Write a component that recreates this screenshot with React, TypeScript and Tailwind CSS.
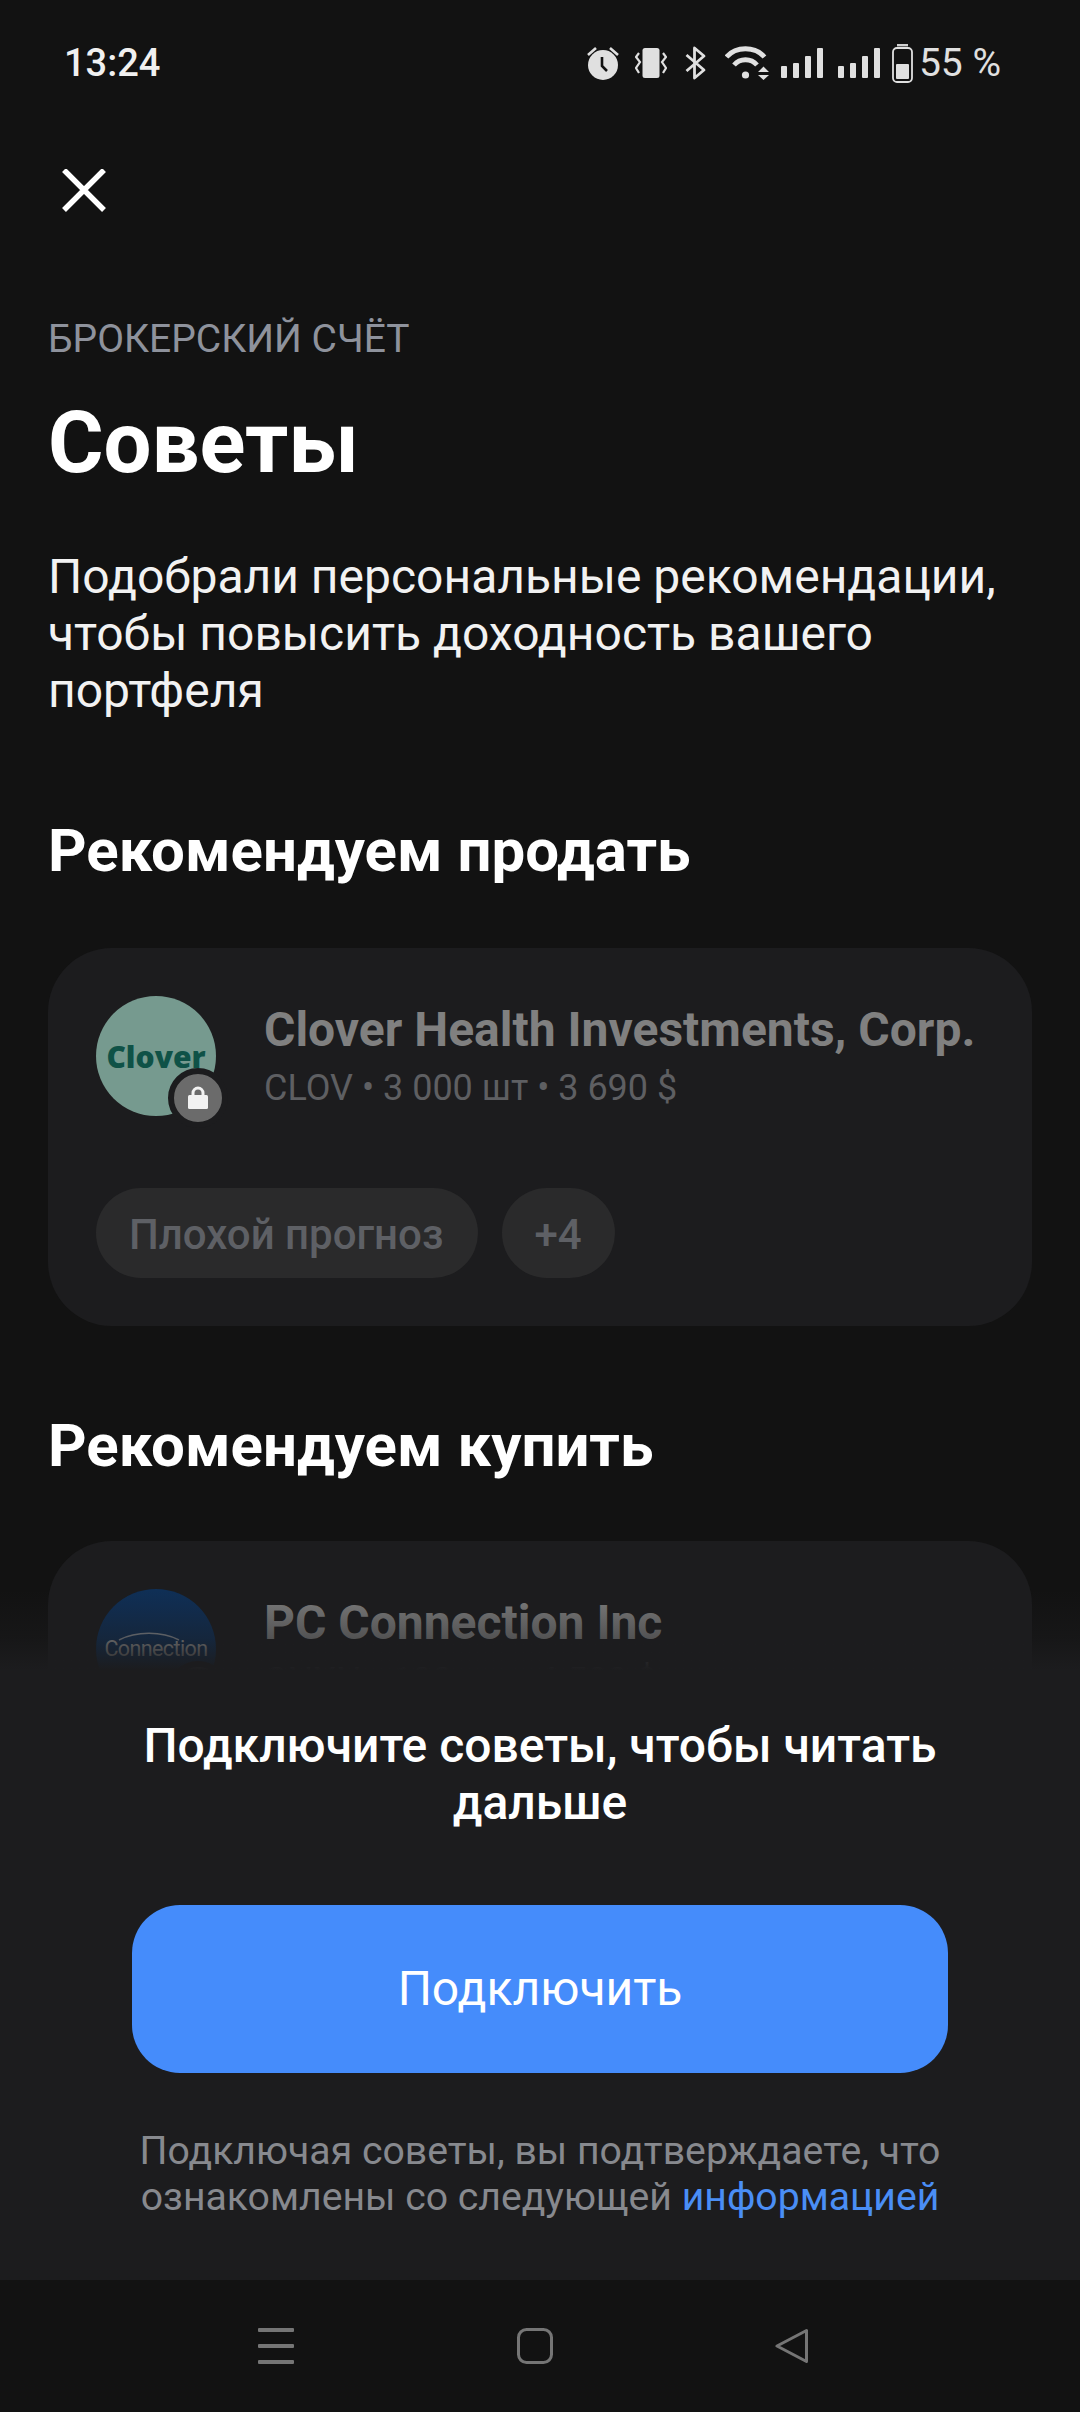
import React from "react";

function Alarm() {
  return (
    <svg width="32" height="34" viewBox="0 0 32 34" fill="none">
      <circle cx="16" cy="19" r="15" fill="#e0e0e0" />
      <path d="M1 9 L9 2 M31 9 L23 2" stroke="#e0e0e0" strokeWidth="2.6" />
      <path d="M15 11 V20 L20 25" stroke="#121212" strokeWidth="2.6" fill="none" />
    </svg>
  );
}
function Vibrate() {
  return (
    <svg width="32" height="30" viewBox="0 0 32 30" fill="none">
      <rect x="7.500" y="0" width="17" height="30" rx="2.500" fill="#e0e0e0" />
      <path d="M4 5 L1 9 L5 14 L1 20 L4 25" stroke="#e0e0e0" strokeWidth="2.200" />
      <path d="M28 5 L31 9 L27 14 L31 20 L28 25" stroke="#e0e0e0" strokeWidth="2.200" />
    </svg>
  );
}
function Bluetooth() {
  return (
    <svg width="21" height="34" viewBox="0 0 21 34" fill="none">
      <path d="M1.500 9 L19 24 L9.500 32 V2 L19 10 L1.500 25" stroke="#e0e0e0" strokeWidth="2.800" strokeLinejoin="round" />
    </svg>
  );
}
function Wifi() {
  return (
    <svg width="44" height="34" viewBox="0 0 44 34" fill="none">
      <path d="M1.500 11 C11 0 30 0 39.500 11" stroke="#e0e0e0" strokeWidth="4.800" />
      <path d="M9 19 C15 12 26 12 32 19" stroke="#e0e0e0" strokeWidth="4.800" />
      <circle cx="20.500" cy="29" r="3.600" fill="#e0e0e0" />
      <path d="M33 26 L44 26 L38.500 20.500 Z M33 29 L44 29 L38.500 34 Z" fill="#e0e0e0" />
    </svg>
  );
}
function Signal() {
  return (
    <svg width="43" height="30" viewBox="0 0 43 30" fill="#e0e0e0">
      <rect x="0" y="18" width="6" height="12" rx="1" />
      <rect x="12" y="15" width="6" height="15" rx="1" />
      <rect x="24" y="8" width="6" height="22" rx="1" />
      <rect x="36" y="0" width="6" height="30" rx="1" />
    </svg>
  );
}
function Battery() {
  return (
    <svg width="21" height="39" viewBox="0 0 21 39" fill="none">
      <rect x="5" y="0" width="11" height="2.400" fill="#d0d0d0" />
      <rect x="1" y="4" width="19" height="34" rx="4" stroke="#e0e0e0" strokeWidth="1.800" />
      <rect x="4" y="20" width="13" height="15" rx="1" fill="#e0e0e0" />
    </svg>
  );
}

function StatusBar() {
  return (
    <div className="flex h-[126px] items-center justify-between pl-[64px] pr-[79px] text-[38px] text-[#f0f0f0]">
      <span className="font-medium">13:24</span>
      <div className="flex items-center">
        <Alarm />
        <div className="ml-[16px]"><Vibrate /></div>
        <div className="ml-[18px]"><Bluetooth /></div>
        <div className="ml-[19px]"><Wifi /></div>
        <div className="ml-[12px]"><Signal /></div>
        <div className="ml-[14px]"><Signal /></div>
        <div className="ml-[11px]"><Battery /></div>
        <span className="ml-[6px] text-[39px] text-[#e0e0e0]">55 %</span>
      </div>
    </div>
  );
}

function Lock() {
  return (
    <svg width="20" height="24" viewBox="0 0 20 24" fill="none">
      <path d="M5 11 V7 a5 5 0 0 1 10 0 V11" stroke="#f2f2f2" strokeWidth="3" />
      <rect x="0" y="9" width="20" height="14" rx="1.500" fill="#f2f2f2" />
    </svg>
  );
}

function Card({ name, sub, logo, chips }: { name: string; sub: string; logo: React.ReactNode; chips?: boolean }) {
  return (
    <div className="mx-[48px] rounded-[64px] bg-[#1c1c1e] p-[48px]">
      <div className="flex items-start">
        <div className="relative h-[120px] w-[120px] shrink-0">
          {logo}
          <div className="absolute right-[-12px] bottom-[-12px] flex h-[60px] w-[60px] items-center justify-center rounded-full border-[6px] border-[#1c1c1e] bg-[#6b6b6b]">
            <Lock />
          </div>
        </div>
        <div className="ml-[48px] min-w-0">
          <div className="mt-[6px] text-[48px] leading-[56px] font-bold whitespace-nowrap text-[#808080]">{name}</div>
          <div className="mt-[8px] text-[36px] leading-[44px] whitespace-nowrap text-[#5e5f62]">{sub}</div>
        </div>
      </div>
      {chips && (
        <div className="mt-[72px] flex gap-[24px]">
          <div className="flex h-[90px] items-center rounded-full bg-[#2a2a2b] pt-[2px] pr-[35px] pl-[33px] text-[42px] font-medium text-[#5e6065]">Плохой прогноз</div>
          <div className="flex h-[90px] items-center rounded-full bg-[#2a2a2b] pt-[2px] pr-[33px] pl-[32px] text-[42px] font-medium text-[#5e6065]">+4</div>
        </div>
      )}
    </div>
  );
}

export default function App() {
  return (
    <div className="flex h-[2412px] w-[1080px] flex-col overflow-hidden bg-[#121212] font-['Roboto',sans-serif]">
      <div className="relative min-h-0 flex-1 overflow-hidden">
        <StatusBar />
        <div className="pl-[62px] pt-[43px]">
          <svg className="block" width="44" height="43" viewBox="0 0 44 43" fill="none">
            <path d="M2 1 L42 41 M42 1 L2 41" stroke="#ffffff" strokeWidth="5.500" />
          </svg>
        </div>
        <div className="px-[48px]">
          <div className="mt-[104px] text-[39px] leading-[46px] text-[#8e929c]">БРОКЕРСКИЙ СЧЁТ</div>
          <h1 className="mt-[31px] text-[85px] leading-[100px] font-bold text-white">Советы</h1>
          <p className="mt-[55px] text-[48px] leading-[57px] text-[#f2f2f2]">
            Подобрали персональные рекомендации,
            <br />
            чтобы повысить доходность вашего
            <br />
            портфеля
          </p>
          <h2 className="mt-[97px] text-[60px] leading-[70px] font-bold text-white">Рекомендуем продать</h2>
        </div>
        <div className="mt-[62px]">
          <Card
            name="Clover Health Investments, Corp."
            sub="CLOV • 3 000 шт • 3 690 $"
            chips
            logo={
              <div className="flex h-full w-full items-center justify-center rounded-full bg-[#769a8f] font-['Open_Sans',sans-serif] text-[30px] font-extrabold text-[#0f5247]">
                Clover
              </div>
            }
          />
        </div>
        <h2 className="mt-[85px] px-[48px] text-[60px] leading-[70px] font-bold text-white">Рекомендуем купить</h2>
        <div className="mt-[60px]">
          <Card
            name="PC Connection Inc"
            sub="CNXN • 100 шт • 4 500 $"
            logo={
              <div className="relative flex h-full w-full items-center justify-center overflow-hidden rounded-full bg-[#0f2f56] text-[21.500px] tracking-[-0.6px] text-[#a0a0a0]">
                <svg className="absolute top-[42px] left-[22px]" width="62" height="10" viewBox="0 0 62 10" fill="none">
                  <path d="M1 9 C18 0 44 0 61 9" stroke="#8a8f96" strokeWidth="1.500" />
                </svg>
                Connection
              </div>
            }
          />
        </div>
        <div className="absolute inset-x-0 bottom-0">
          <div className="h-[80px] bg-gradient-to-b from-[#1c1c1e00] via-[#1c1c1e73] via-60% to-[#1c1c1e]" />
          <div className="bg-[#1c1c1e] pb-[60px] pt-[47px]">
            <div className="text-center text-[48px] leading-[57px] font-medium text-white">
              Подключите советы, чтобы читать
              <br />
              дальше
            </div>
            <button className="mx-auto mt-[74px] flex h-[168px] w-[816px] items-center justify-center rounded-[48px] bg-[#458cfb] text-[48px] text-white">
              Подключить
            </button>
            <div className="mt-[55px] text-center text-[39.200px] leading-[46px] text-[#87898e]">
              Подключая советы, вы подтверждаете, что
              <br />
              ознакомлены со следующей <span className="text-[#4a8ef5]">информацией</span>
            </div>
          </div>
        </div>
      </div>
      <div className="flex h-[132px] shrink-0 items-center justify-between bg-[#121212] pr-[271px] pl-[258px]">
        <svg className="block" width="36" height="36" viewBox="0 0 36 36" fill="#757575">
          <rect x="0" y="0" width="36" height="4" rx="1" />
          <rect x="0" y="16" width="36" height="4" rx="1" />
          <rect x="0" y="32" width="36" height="4" rx="1" />
        </svg>
        <svg className="block" width="36" height="36" viewBox="0 0 36 36" fill="none">
          <rect x="1.500" y="1.500" width="33" height="33" rx="8" stroke="#757575" strokeWidth="3" />
        </svg>
        <svg className="block" width="34" height="36" viewBox="0 0 34 36" fill="none">
          <path d="M31.500 2.500 V33.500 L2 18 Z" stroke="#757575" strokeWidth="3" strokeLinejoin="round" />
        </svg>
      </div>
    </div>
  );
}
